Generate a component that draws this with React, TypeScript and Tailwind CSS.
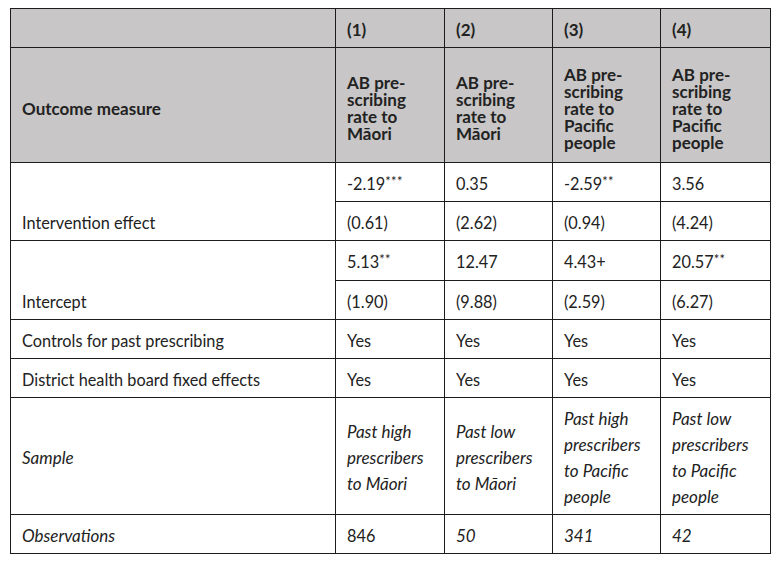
import React from "react";

const Star = ({ s }: { s: string }) => (
  <span className="relative top-[-4px] text-[13px] tracking-[0.3px]">{s}</span>
);

const td = "border border-[#1c1c1c] px-[11px]";

export default function App() {
  return (
    <div className="min-h-[563px] w-[778px] bg-white pt-[8px] pl-[10px] text-[#222] [font-family:Lato,'Liberation_Sans',sans-serif] text-[16.3px]">
      <table className="table-fixed border-collapse w-[760px]">
        <colgroup>
          <col className="w-[325px]" />
          <col className="w-[109px]" />
          <col className="w-[108px]" />
          <col className="w-[108px]" />
          <col className="w-[110px]" />
        </colgroup>
        <thead className="bg-[#c8c6c6] font-bold text-[17px]">
          <tr className="h-[39px]">
            <th className={`${td} align-middle`}></th>
            <th className={`${td} align-middle text-left pt-[4px]`}>(1)</th>
            <th className={`${td} align-middle text-left pt-[4px]`}>(2)</th>
            <th className={`${td} align-middle text-left pt-[4px]`}>(3)</th>
            <th className={`${td} align-middle text-left pt-[4px]`}>(4)</th>
          </tr>
          <tr className="h-[115px] leading-[17px]">
            <th className={`${td} align-middle text-left pt-[6px]`}>Outcome measure</th>
            <th className={`${td} align-middle text-left pt-[6px]`}>AB pre-<br />scribing<br />rate to<br />Māori</th>
            <th className={`${td} align-middle text-left pt-[6px]`}>AB pre-<br />scribing<br />rate to<br />Māori</th>
            <th className={`${td} align-middle text-left pt-[6px]`}>AB pre-<br />scribing<br />rate to<br />Pacific<br />people</th>
            <th className={`${td} align-middle text-left pt-[6px]`}>AB pre-<br />scribing<br />rate to<br />Pacific<br />people</th>
          </tr>
        </thead>
        <tbody>
          <tr className="h-[39px]">
            <td rowSpan={2} className={`${td} align-bottom pb-[5px]`}>Intervention effect</td>
            <td className={`${td} align-middle pt-[4px]`}>-2.19<Star s="***" /></td>
            <td className={`${td} align-middle pt-[4px]`}>0.35</td>
            <td className={`${td} align-middle pt-[4px]`}>-2.59<Star s="**" /></td>
            <td className={`${td} align-middle pt-[4px]`}>3.56</td>
          </tr>
          <tr className="h-[39px]">
            <td className={`${td} align-middle pt-[4px]`}>(0.61)</td>
            <td className={`${td} align-middle pt-[4px]`}>(2.62)</td>
            <td className={`${td} align-middle pt-[4px]`}>(0.94)</td>
            <td className={`${td} align-middle pt-[4px]`}>(4.24)</td>
          </tr>
          <tr className="h-[40px]">
            <td rowSpan={2} className={`${td} align-bottom pb-[5px]`}>Intercept</td>
            <td className={`${td} align-middle pt-[4px]`}>5.13<Star s="**" /></td>
            <td className={`${td} align-middle pt-[4px]`}>12.47</td>
            <td className={`${td} align-middle pt-[4px]`}>4.43+</td>
            <td className={`${td} align-middle pt-[4px]`}>20.57<Star s="**" /></td>
          </tr>
          <tr className="h-[39px]">
            <td className={`${td} align-middle pt-[4px]`}>(1.90)</td>
            <td className={`${td} align-middle pt-[4px]`}>(9.88)</td>
            <td className={`${td} align-middle pt-[4px]`}>(2.59)</td>
            <td className={`${td} align-middle pt-[4px]`}>(6.27)</td>
          </tr>
          <tr className="h-[39px]">
            <td className={`${td} align-middle pt-[4px]`}>Controls for past prescribing</td>
            <td className={`${td} align-middle pt-[4px]`}>Yes</td>
            <td className={`${td} align-middle pt-[4px]`}>Yes</td>
            <td className={`${td} align-middle pt-[4px]`}>Yes</td>
            <td className={`${td} align-middle pt-[4px]`}>Yes</td>
          </tr>
          <tr className="h-[39px]">
            <td className={`${td} align-middle pt-[4px]`}>District health board fixed effects</td>
            <td className={`${td} align-middle pt-[4px]`}>Yes</td>
            <td className={`${td} align-middle pt-[4px]`}>Yes</td>
            <td className={`${td} align-middle pt-[4px]`}>Yes</td>
            <td className={`${td} align-middle pt-[4px]`}>Yes</td>
          </tr>
          <tr className="h-[117px] italic leading-[26px] text-[17px]">
            <td className={`${td} align-middle pt-[4px]`}>Sample</td>
            <td className={`${td} align-middle pt-[4px]`}>Past high<br />prescribers<br />to Māori</td>
            <td className={`${td} align-middle pt-[4px]`}>Past low<br />prescribers<br />to Māori</td>
            <td className={`${td} align-middle pt-[4px]`}>Past high<br />prescribers<br />to Pacific<br />people</td>
            <td className={`${td} align-middle pt-[4px]`}>Past low<br />prescribers<br />to Pacific<br />people</td>
          </tr>
          <tr className="h-[39px]">
            <td className={`${td} align-middle pt-[4px] italic text-[17px]`}>Observations</td>
            <td className={`${td} align-middle pt-[4px]`}>846</td>
            <td className={`${td} align-middle pt-[4px] italic text-[17px]`}>50</td>
            <td className={`${td} align-middle pt-[4px] italic text-[17px]`}>341</td>
            <td className={`${td} align-middle pt-[4px] italic text-[17px]`}>42</td>
          </tr>
        </tbody>
      </table>
    </div>
  );
}
